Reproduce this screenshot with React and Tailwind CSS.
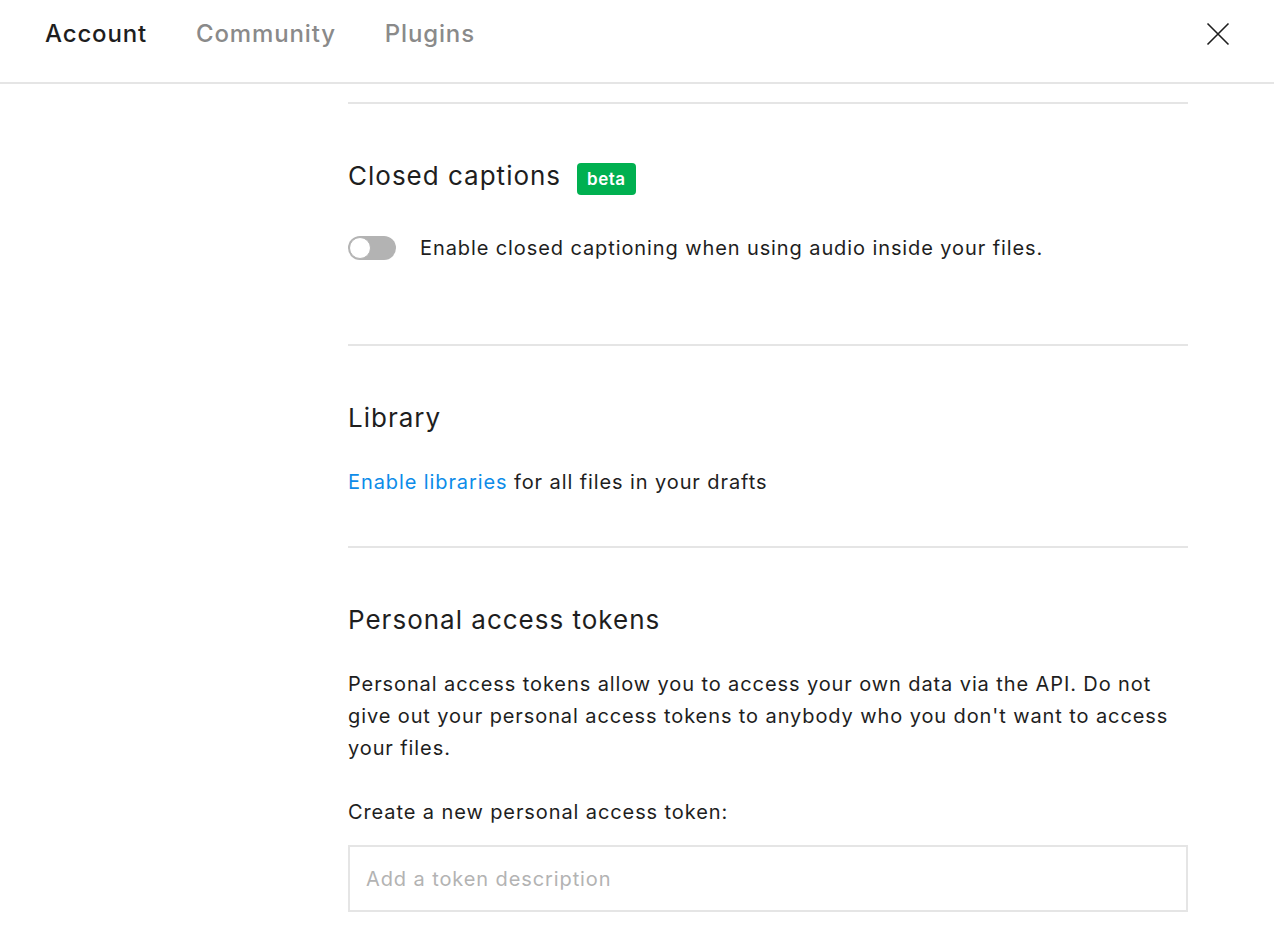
import { useState } from "react";

const font = { fontFamily: "Inter, 'Noto Sans', sans-serif" };

function Toggle({ on, onChange }) {
  return (
    <button
      onClick={() => onChange(!on)}
      className={`relative w-[48px] h-[24px] rounded-full shrink-0 ${on ? "bg-[#18a0fb]" : "bg-[#b3b3b3]"}`}
    >
      <span
        className={`absolute top-[1px] w-[22px] h-[22px] rounded-full bg-white border border-[#b3b3b3] ${on ? "left-[25px]" : "left-[1px]"}`}
      />
    </button>
  );
}

export default function App() {
  const [captions, setCaptions] = useState(false);

  return (
    <div style={font} className="min-h-screen bg-white text-[#1e1e1e]">
      {/* Tabs header */}
      <div className="h-[84px] border-b-2 border-[#e5e5e5] flex items-start justify-between pl-[45px] pr-[44px] pt-[18px]">
        <div className="flex items-center gap-[49px] text-[24px] leading-[32px] font-medium tracking-[0.85px]">
          <span className="text-[#1e1e1e]">Account</span>
          <span className="text-[#8a8a8a]">Community</span>
          <span className="text-[#8a8a8a]">Plugins</span>
        </div>
        <button className="mt-[4px]">
          <svg width="24" height="24" viewBox="0 0 24 24" fill="none" stroke="#1e1e1e" strokeWidth="1.6">
            <path d="M1.5 1.5L22.5 22.5M22.5 1.5L1.5 22.5" />
          </svg>
        </button>
      </div>

      <div className="pl-[348px] pr-[86px] pt-[18px] text-[20px] leading-[32px] tracking-[0.9px]">
        {/* Closed captions */}
        <section className="border-t-2 border-[#e5e5e5] pt-[52px] pb-[80px]">
          <div className="flex items-center gap-[16px]">
            <h2 className="text-[26px] leading-[40px] tracking-[1px]">Closed captions</h2>
            <span className="mt-[6px] bg-[#00b050] text-white text-[17px] font-semibold leading-[32px] px-[10px] rounded-[4px] tracking-[0.5px]">beta</span>
          </div>
          <div className="mt-9 flex items-center gap-[24px]">
            <Toggle on={captions} onChange={setCaptions} />
            <span>Enable closed captioning when using audio inside your files.</span>
          </div>
        </section>

        {/* Library */}
        <section className="border-t-2 border-[#e5e5e5] pt-[52px] pb-[48px]">
          <h2 className="text-[26px] leading-[40px] tracking-[1px]">Library</h2>
          <p className="mt-7">
            <a href="#" className="text-[#0d8ce9]">Enable libraries</a> for all files in your drafts
          </p>
        </section>

        {/* Personal access tokens */}
        <section className="border-t-2 border-[#e5e5e5] pt-[52px]">
          <h2 className="text-[26px] leading-[40px] tracking-[1px]">Personal access tokens</h2>
          <p className="mt-7">
            Personal access tokens allow you to access your own data via the API. Do not give out your personal access tokens to anybody who you don't want to access your files.
          </p>
          <p className="mt-8">Create a new personal access token:</p>
          <input
            placeholder="Add a token description"
            className="mt-[17px] w-full h-[67px] border-2 border-[#e5e5e5] px-[16px] outline-none placeholder:text-[#b3b3b3]"
          />
        </section>
      </div>
    </div>
  );
}
